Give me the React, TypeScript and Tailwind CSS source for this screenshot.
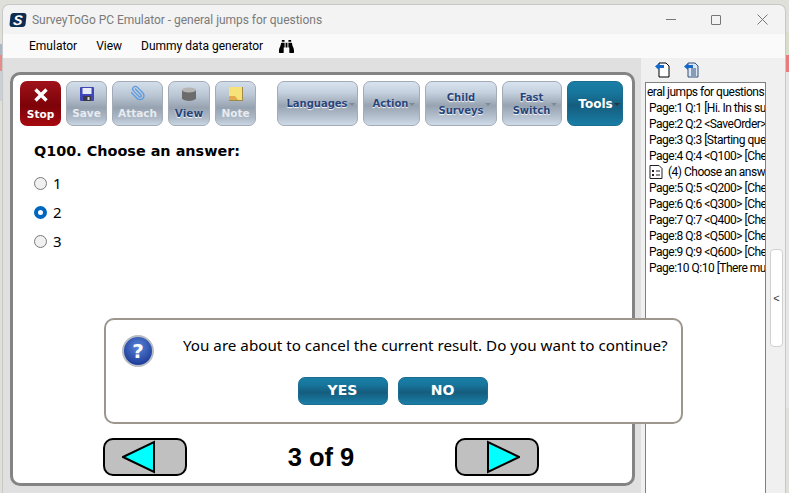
import React from "react";
import { FaBinoculars } from "react-icons/fa";
import { Paperclip } from "lucide-react";

const treeRows = [
  "Page:1 Q:1 [Hi. In this su",
  "Page:2 Q:2 <SaveOrder>",
  "Page:3 Q:3 [Starting que",
  "Page:4 Q:4 <Q100> [Che",
  "",
  "Page:5 Q:5 <Q200> [Che",
  "Page:6 Q:6 <Q300> [Che",
  "Page:7 Q:7 <Q400> [Che",
  "Page:8 Q:8 <Q500> [Che",
  "Page:9 Q:9 <Q600> [Che",
  "Page:10 Q:10 [There mu",
];

const grayBtn =
  "h-[45px] shrink-0 rounded-[7px] border border-[#a3abb6] bg-[linear-gradient(#d8e3f0,#c5d0de_25%,#98a3b1_55%,#b4bfcd_80%,#d0dbe9)] flex items-center justify-center text-center font-['DejaVu_Sans'] text-[10px] leading-[13px] font-bold text-[#26457a] [text-shadow:0_1px_1px_#fff]";

const disabledBtn =
  "h-[45px] shrink-0 rounded-[7px] border border-[#a3abb6] bg-[linear-gradient(#d3deeb,#bcc7d5_30%,#97a2b0_60%,#b0bbc9_85%,#cbd6e4)] flex flex-col items-center justify-between pt-[5px] pb-[5px] font-['DejaVu_Sans'] text-[10.5px] leading-[14px] font-bold";

const blueBtn =
  "rounded-[7px] border border-[#1a6d90] bg-[linear-gradient(#1a7ea6,#17769c_25%,#155d7e_55%,#176f94_80%,#1a7ea6)] flex items-center justify-center font-['DejaVu_Sans'] font-bold text-white";

function Caret({ dark }: { dark?: boolean }) {
  return (
    <span
      className={
        dark
          ? "ml-px mt-[2px] h-0 w-0 border-x-[3px] border-t-[3px] border-x-transparent border-t-[#2b3440]"
          : "ml-px mt-[2px] h-0 w-0 border-x-[3px] border-t-[3px] border-x-transparent border-t-[#808a96]"
      }
    />
  );
}

function Toolbar() {
  return (
    <div className="ml-[7px] mt-[6px] flex gap-[5px]">
      <div className="flex h-[45px] w-[41px] shrink-0 flex-col items-center justify-between rounded-[7px] bg-[linear-gradient(#a0121a,#7d0309_55%,#a60a10)] pt-[7px] pb-[5px] font-['DejaVu_Sans'] text-[10.5px] leading-[14px] font-bold text-white">
        <svg width="14" height="14" viewBox="0 0 14 14">
          <path d="M1.5 1.5 L12.5 12.5 M12.5 1.5 L1.5 12.5" stroke="#fff" strokeWidth="3.4" />
        </svg>
        Stop
      </div>
      <div className={`${disabledBtn} w-[41px] text-[#e6ebf1]`}>
        <svg width="14" height="14" viewBox="0 0 14 14">
          <rect width="14" height="14" rx="1" fill="#3f46b8" />
          <rect x="2.5" y="1" width="9" height="6" fill="#e8ecf8" />
          <rect x="3" y="9" width="8" height="5" fill="#3a3a44" />
          <rect x="7.5" y="10" width="2" height="3" fill="#d8d8d8" />
        </svg>
        Save
      </div>
      <div className={`${disabledBtn} w-[51px] text-[#e6ebf1]`}>
        <Paperclip size={16} strokeWidth={2} className="-mt-[2px] -scale-x-100 text-[#5b9be0]" />
        Attach
      </div>
      <div className={`${disabledBtn} w-[42px] text-[#26457a] [text-shadow:0_1px_1px_#fff]`}>
        <svg width="16" height="15" viewBox="0 0 16 15">
          <path d="M1 3 L1 12 Q8 16 15 12 L15 3 Z" fill="#6c6c6c" />
          <ellipse cx="8" cy="3" rx="7" ry="2.6" fill="#b4b4b4" />
        </svg>
        View
      </div>
      <div className={`${disabledBtn} w-[41px] text-[#e6ebf1]`}>
        <svg width="14" height="14" viewBox="0 0 14 14">
          <rect width="14" height="14" fill="#f7e27a" />
          <path d="M0 9 H6 L10 14 H0 Z" fill="#e2a94f" />
          <path d="M0 13.5 H14 M13.5 0 V14" stroke="#a08a48" />
        </svg>
        Note
      </div>
      <div className={`${grayBtn} ml-[16px] w-[81px] pl-[6px]`}>
        Languages
        <Caret />
      </div>
      <div className={`${grayBtn} w-[57px] pl-[5px]`}>
        Action
        <Caret />
      </div>
      <div className={`${grayBtn} w-[72px]`}>
        <span className="ml-[7px]">
          Child
          <br />
          Surveys
        </span>
        <Caret />
      </div>
      <div className={`${grayBtn} w-[60px]`}>
        <span className="ml-[6px]">
          Fast
          <br />
          Switch
        </span>
        <Caret />
      </div>
      <div className={`${blueBtn} h-[45px] w-[56px] shrink-0 pl-[8px] text-[12px]`}>
        Tools
        <Caret dark />
      </div>
    </div>
  );
}

function Radio({ label, checked }: { label: string; checked?: boolean }) {
  return (
    <div className="flex h-[29px] items-center gap-[6px]">
      <span
        className={
          checked
            ? "h-[13px] w-[13px] rounded-full border-[4px] border-[#0067c0] bg-white"
            : "h-[13px] w-[13px] rounded-full border border-[#7a7a7a] bg-[#f0f0f0]"
        }
      />
      <span className="font-['Noto_Sans'] text-[15px] text-black">{label}</span>
    </div>
  );
}

function NavButton({ dir }: { dir: "left" | "right" }) {
  return (
    <div
      className={
        dir === "left"
          ? "flex h-[38px] w-[84px] items-center justify-center rounded-[10px] border-2 border-black bg-[#c0c0c0] pr-[12px]"
          : "flex h-[38px] w-[84px] items-center justify-center rounded-[10px] border-2 border-black bg-[#c0c0c0] pl-[12px]"
      }
    >
      <svg width="34" height="34" viewBox="0 0 34 34">
        <polygon
          points={dir === "left" ? "1,17 32,2 32,32" : "2,2 2,32 33,17"}
          fill="#00ffff"
          stroke="#000"
          strokeWidth="2"
        />
      </svg>
    </div>
  );
}

function DocIcon({ flip }: { flip?: boolean }) {
  return (
    <svg width="16" height="16" viewBox="0 0 16 16">
      <path d="M4 1 H11 L14 4 V15 H4 Z" fill={flip ? "#dbe7f5" : "#fff"} stroke={flip ? "#34507a" : "#000"} />
      {flip && <path d="M7 7 H12 M7 9 H12 M7 11 H12 M7 13 H12" stroke="#34507a" />}
      <path d="M0 4.5 L4 1 V3 H9 V6 H4 V8 Z" fill="#1668c8" />
    </svg>
  );
}

export default function App() {
  return (
    <div className="relative flex h-[493px] w-[789px] overflow-hidden bg-[#dfe0da]">
      <div className="flex w-[2px] shrink-0 flex-col pt-[44px]">
        <div className="h-[11px] bg-[#a9b8c4]" />
        <div className="h-[16px] bg-[#e58b88]" />
        <div className="h-[30px] bg-[#c9d0d8]" />
      </div>

      <div className="mt-[4px] flex w-[784px] shrink-0 flex-col overflow-hidden rounded-t-[7px] border-x border-t border-[#c8c8c8] bg-[#f3f3f3]">
        <div className="flex h-[29px] shrink-0 items-center pl-[7px]">
          <span className="flex h-[14px] w-[16px] -skew-x-6 items-center justify-center rounded-[3px] bg-[#0f2d50] font-['Liberation_Sans'] text-[14px] font-bold italic text-white">
            S
          </span>
          <span className="ml-[6px] font-['Roboto'] text-[12px] tracking-[-0.03px] text-[#7a7a7a]">
            SurveyToGo PC Emulator - general jumps for questions
          </span>
          <div className="ml-auto flex items-center text-[#777]">
            <span className="h-px w-[10px] bg-[#777]" />
            <span className="ml-[35px] h-[10px] w-[10px] rounded-[1px] border border-[#777]" />
            <svg className="ml-[36px] mr-[17px]" width="11" height="11" viewBox="0 0 11 11">
              <path d="M0.5 0.5 L10.5 10.5 M10.5 0.5 L0.5 10.5" stroke="#777" />
            </svg>
          </div>
        </div>

        <div className="flex h-[24px] shrink-0 items-center bg-[#fafafa] pl-[26px] font-['Roboto'] text-[12px] text-black">
          <span>Emulator</span>
          <span className="ml-[19px]">View</span>
          <span className="ml-[19px]">Dummy data generator</span>
          <FaBinoculars className="ml-[16px] text-[15px]" />
        </div>

        <div className="flex min-h-0 flex-1">
          <div className="flex w-[638px] shrink-0 bg-[#e0e0e0] pt-[14px] pb-[7px] pl-[7px]">
            <div className="flex h-[414px] w-[625px] flex-col rounded-[10px] border-[3px] border-[#848484] bg-white">
              <Toolbar />
              <div className="ml-[21px] mt-[14px] font-['DejaVu_Sans'] text-[14.4px] leading-[22px] font-bold text-black">
                Q100. Choose an answer:
              </div>
              <div className="ml-[21px] mt-[7px]">
                <Radio label="1" />
                <Radio label="2" checked />
                <Radio label="3" />
              </div>
              <div className="mb-[7px] ml-[90px] mt-auto flex w-[436px] items-center justify-between">
                <NavButton dir="left" />
                <span className="font-['Liberation_Sans'] text-[25.5px] font-bold text-black">3 of 9</span>
                <NavButton dir="right" />
              </div>
            </div>
          </div>

          <div className="flex min-w-0 flex-1 flex-col bg-[#f0f0f0]">
            <div className="flex h-[24px] shrink-0 items-center gap-[13px] pb-[1px] pl-[14px]">
              <DocIcon />
              <DocIcon flip />
            </div>
            <div className="flex min-h-0 flex-1">
              <div className="ml-[4px] w-[121px] shrink-0 overflow-hidden border-x border-t border-[#808080] bg-white pt-px font-['Roboto'] text-[12px] leading-[16px] tracking-[-0.5px] whitespace-nowrap text-black">
                <div className="pl-px">eral jumps for questions</div>
                {treeRows.map((row, i) =>
                  row ? (
                    <div key={i} className="pl-[3px]">
                      {row}
                    </div>
                  ) : (
                    <div key={i} className="flex h-[16px] items-center pl-[3px]">
                      <svg className="shrink-0" width="14" height="14" viewBox="0 0 14 14">
                        <path d="M1 .5 H10 L13 3.5 V13.5 H1 Z" fill="#fff" stroke="#222" />
                        <path d="M3 5 H5 V7 H3 Z M3 9 H5 V11 H3 Z" fill="#222" />
                        <path d="M7 6 H11 M7 10 H11" stroke="#222" />
                      </svg>
                      <span className="ml-[5px]">(4) Choose an answe</span>
                    </div>
                  )
                )}
              </div>
              <div className="ml-[4px] mt-[167px] flex h-[98px] w-[13px] items-center justify-center rounded-[4px] border border-[#d0d0d0] bg-white font-['Liberation_Sans'] text-[11px] text-[#333]">
                &lt;
              </div>
            </div>
          </div>
        </div>
      </div>

      <div className="flex w-[3px] shrink-0 flex-col pt-[32px]">
        <div className="h-[23px] bg-[#d9ddcc]" />
        <div className="h-[17px] bg-[#e87c7c]" />
        <div className="h-[336px] bg-[#e6e6e6]" />
      </div>

      <div className="absolute left-[104px] top-[318px] flex h-[106px] w-[579px] flex-col rounded-[10px] border-2 border-[#9c968c] bg-white">
        <div className="flex items-start pl-[16px] pt-[15px]">
          <span className="flex h-[32px] w-[32px] items-center justify-center rounded-full border-2 border-[#b8bcc4] bg-[radial-gradient(circle_at_50%_35%,#5a86d8,#1f3f9c_75%)] font-['DejaVu_Sans'] text-[20px] font-bold text-white">
            ?
          </span>
          <span className="ml-[29px] font-['Noto_Sans'] text-[15.2px] leading-[20px] text-black">
            You are about to cancel the current result. Do you want to continue?
          </span>
        </div>
        <div className="mt-[10px] flex justify-center gap-[10px] pr-[2px]">
          <div className={`${blueBtn} h-[28px] w-[90px] pb-px text-[14px]`}>YES</div>
          <div className={`${blueBtn} h-[28px] w-[90px] pb-px text-[14px]`}>NO</div>
        </div>
      </div>
    </div>
  );
}
